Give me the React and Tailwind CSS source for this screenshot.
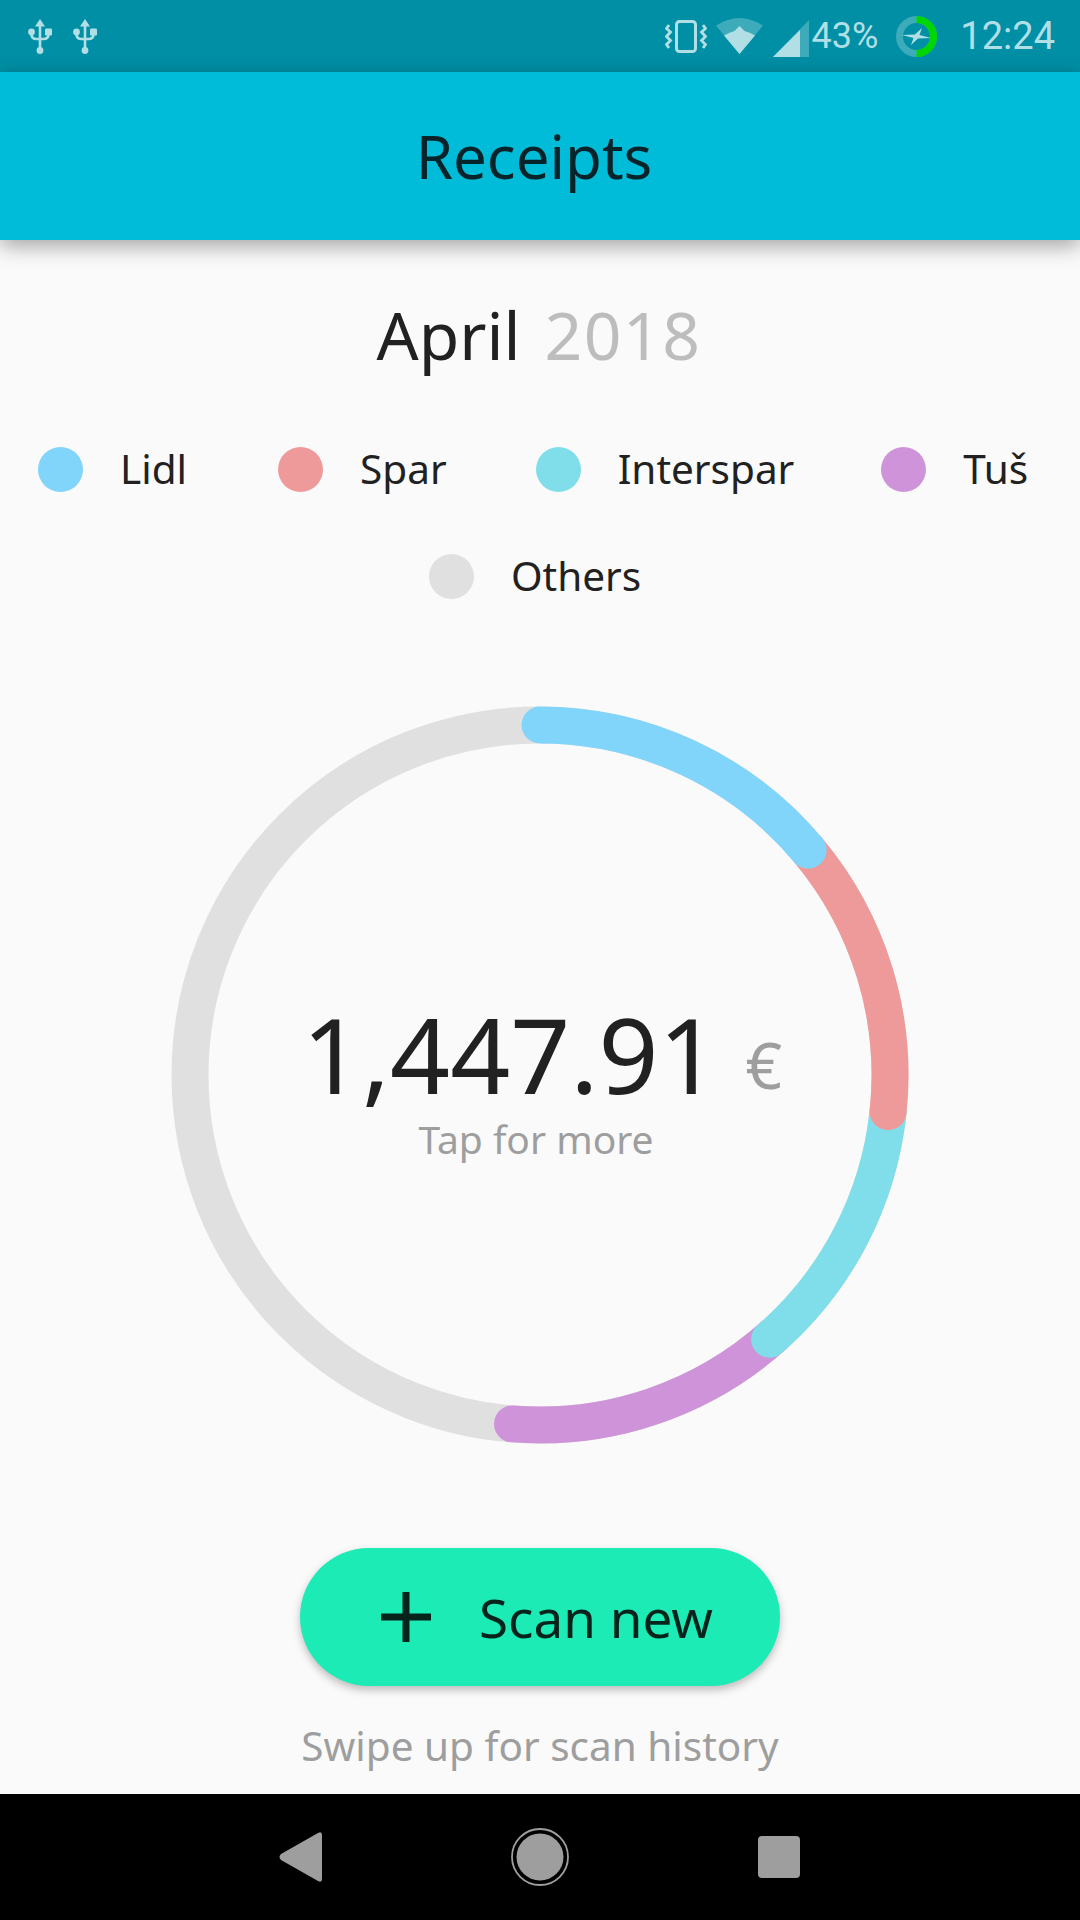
const CX = 380
const CY = 380
const R = 350
const LEGEND_TOP = [
  { name: 'Lidl', color: 'bg-[#81d4fa]', offset: '' },
  { name: 'Spar', color: 'bg-[#ef9a9a]', offset: 'ml-[91px]' },
  { name: 'Interspar', color: 'bg-[#80deea]', offset: 'ml-[89px]' },
  { name: 'Tuš', color: 'bg-[#ce93d8]', offset: 'ml-[87px]' },
]

// drawn back to front so each start/end cap overlaps the next slice
const SLICES = [
  { color: '#ce93d8', from: 138, to: 184.500 },
  { color: '#80deea', from: 96, to: 139 },
  { color: '#ef9a9a', from: 50, to: 96 },
  { color: '#81d4fa', from: 0, to: 50 },
]

function point(deg) {
  const a = (deg * Math.PI) / 180
  return [CX + R * Math.sin(a), CY - R * Math.cos(a)]
}

function arc(from, to) {
  const [x1, y1] = point(from)
  const [x2, y2] = point(to)
  return `M ${x1} ${y1} A ${R} ${R} 0 0 1 ${x2} ${y2}`
}

function UsbIcon() {
  return (
    <svg width="24" height="35" viewBox="0 0 24 35" className="text-[#b2dfe6]">
      <path d="M12 0l5 7.500H7z" fill="currentColor" />
      <path d="M12 5v27M3.500 12v3q0 5 5 5h7q5 0 5-5v-3" stroke="currentColor" strokeWidth="2.600" fill="none" />
      <circle cx="3.500" cy="13" r="3.400" fill="currentColor" />
      <rect x="17" y="9.500" width="7" height="7" rx="1.200" fill="currentColor" />
      <circle cx="12" cy="31.500" r="3.400" fill="currentColor" />
    </svg>
  )
}

function VibrateIcon() {
  return (
    <svg width="42" height="33" viewBox="0 0 42 33" fill="none" stroke="#b2dfe6" className="mr-[9px]">
      <rect x="11.500" y="1.500" width="19" height="30" rx="3" strokeWidth="3" />
      <path d="M4 5L1.500 8.500 5.500 12l-4 4.500 4 4-4 4L4 28" strokeWidth="2.800" />
      <path d="M38 5l2.500 3.500-4 3.500 4 4.500-4 4 4 4L38 28" strokeWidth="2.800" />
    </svg>
  )
}

function WifiIcon() {
  return (
    <svg width="47" height="36" viewBox="0 0 47 36" className="mr-[10px]">
      <path d="M0 7.500Q23.500-7.500 47 7.500L23.500 36z" fill="#b2dfe6" fillOpacity="0.35" />
      <path d="M8 17.500Q14 14 18.500 13L23.500 8l5 5q5 1 10.500 4.500L23.500 36z" fill="#b2dfe6" />
    </svg>
  )
}

function SignalIcon() {
  return (
    <svg width="36" height="37" viewBox="0 0 36 37" className="mr-[3px] translate-y-[2px]">
      <path d="M36 0v37H0z" fill="#b2dfe6" fillOpacity="0.35" />
      <path d="M27 10v27H0z" fill="#b2dfe6" />
    </svg>
  )
}

function BatteryIcon() {
  return (
    <svg width="41" height="41" viewBox="0 0 41 41" fill="none" className="ml-[18px] mr-[23px]">
      <circle cx="20.500" cy="20.500" r="17" stroke="#b2dfe6" strokeOpacity="0.35" strokeWidth="7" />
      <path d="M20.500 3.500a17 17 0 0 1 0 34" stroke="#00d600" strokeWidth="7" />
      <path d="M6 19l13-.5 7-6.500-2.500 7 11.500 3-13 .5-7 6.500 2.500-7z" fill="#b2dfe6" />
    </svg>
  )
}

function StatusBar() {
  return (
    <div className="h-[72px] bg-[#008fa5] flex items-center pl-[28px] pr-[25px] font-['Roboto',sans-serif] text-[#b2dfe6]">
      <div className="flex gap-[21px]">
        <UsbIcon />
        <UsbIcon />
      </div>
      <div className="ml-auto flex items-center">
        <VibrateIcon />
        <WifiIcon />
        <SignalIcon />
        <span className="text-[36px] leading-none">43%</span>
        <BatteryIcon />
        <span className="text-[38px] leading-none">12:24</span>
      </div>
    </div>
  )
}

function LegendItem({ name, color, offset }) {
  return (
    <div className={`flex items-center gap-[37px] ${offset}`}>
      <span className={`w-[45px] h-[45px] rounded-full ${color}`} />
      <span className="text-[40.500px] leading-none text-[#212121]">{name}</span>
    </div>
  )
}

function Ring() {
  return (
    <div className="relative w-[760px] h-[760px] mt-[96px] mx-auto">
      <svg width="760" height="760" viewBox="0 0 760 760" fill="none">
        <circle cx={CX} cy={CY} r={R} stroke="#e0e0e0" strokeWidth="37" />
        {SLICES.map((s) => (
          <path key={s.color} d={arc(s.from, s.to)} stroke={s.color} strokeWidth="37" strokeLinecap="round" />
        ))}
      </svg>
      <div className="absolute inset-0 flex flex-col items-center justify-center">
        <div className="flex items-baseline gap-[27px] pt-[8px] pl-[4px]">
          <span className="text-[105px] leading-none text-[#212121]">1,447.91</span>
          <span className="text-[64px] leading-none text-[#9e9e9e] -translate-y-[5px]">€</span>
        </div>
        <span className="text-[39px] leading-none text-[#9e9e9e] mt-[13px] -ml-[8px]">Tap for more</span>
      </div>
    </div>
  )
}

function Footer() {
  return (
    <div className="flex flex-col items-center">
      <button className="w-[480px] h-[138px] mt-[93px] rounded-full bg-[#1debb6] shadow-[0_4px_8px_rgba(0,0,0,0.25)] flex items-center justify-center gap-[48px] pl-[14px] text-[#06241c]">
        <svg width="50" height="50" viewBox="0 0 50 50" fill="currentColor">
          <path d="M21.500 0h7v21.500H50v7H28.500V50h-7V28.500H0v-7h21.500z" />
        </svg>
        <span className="text-[53px] leading-none">Scan new</span>
      </button>
      <p className="text-[40.500px] leading-none text-[#9e9e9e] mt-[40px]">Swipe up for scan history</p>
    </div>
  )
}

function NavBar() {
  return (
    <div className="h-[126px] bg-black flex items-center justify-center gap-[189px] pr-[2px]">
      <svg width="43" height="50" viewBox="0 0 43 50">
        <path d="M39 1q4-2 4 2v44q0 4-4 2L2 28q-3-3 0-6z" fill="#9e9e9e" />
      </svg>
      <svg width="58" height="58" viewBox="0 0 58 58" fill="none">
        <circle cx="29" cy="29" r="28" stroke="#9e9e9e" strokeWidth="1.800" />
        <circle cx="29" cy="29" r="23.500" fill="#9e9e9e" />
      </svg>
      <div className="w-[42px] h-[42px] bg-[#9e9e9e] rounded-[4px]" />
    </div>
  )
}

export default function App() {
  return (
    <div className="w-[1080px] h-[1920px] flex flex-col bg-[#fafafa] font-['Noto_Sans',sans-serif]">
      <StatusBar />
      <header className="h-[168px] bg-[#00bcd8] shadow-[0_6px_20px_rgba(0,0,0,0.35)] flex items-center justify-center pr-[12px]">
        <h1 className="text-[60px] leading-none text-[#06242a]">Receipts</h1>
      </header>
      <main className="flex-1">
        <h2 className="mt-[56px] flex justify-center gap-[24px] text-[66px] leading-[76px] -ml-[2px]">
          <span className="text-[#212121]">April</span>
          <span className="text-[#bdbdbd] tracking-[1.500px]">2018</span>
        </h2>
        <div className="mt-[75px] flex pl-[38px]">
          {LEGEND_TOP.map((item) => (
            <LegendItem key={item.name} {...item} />
          ))}
        </div>
        <div className="mt-[62px] flex justify-center -ml-[10px]">
          <LegendItem name="Others" color="bg-[#e0e0e0]" offset="" />
        </div>
        <Ring />
        <Footer />
      </main>
      <NavBar />
    </div>
  )
}
